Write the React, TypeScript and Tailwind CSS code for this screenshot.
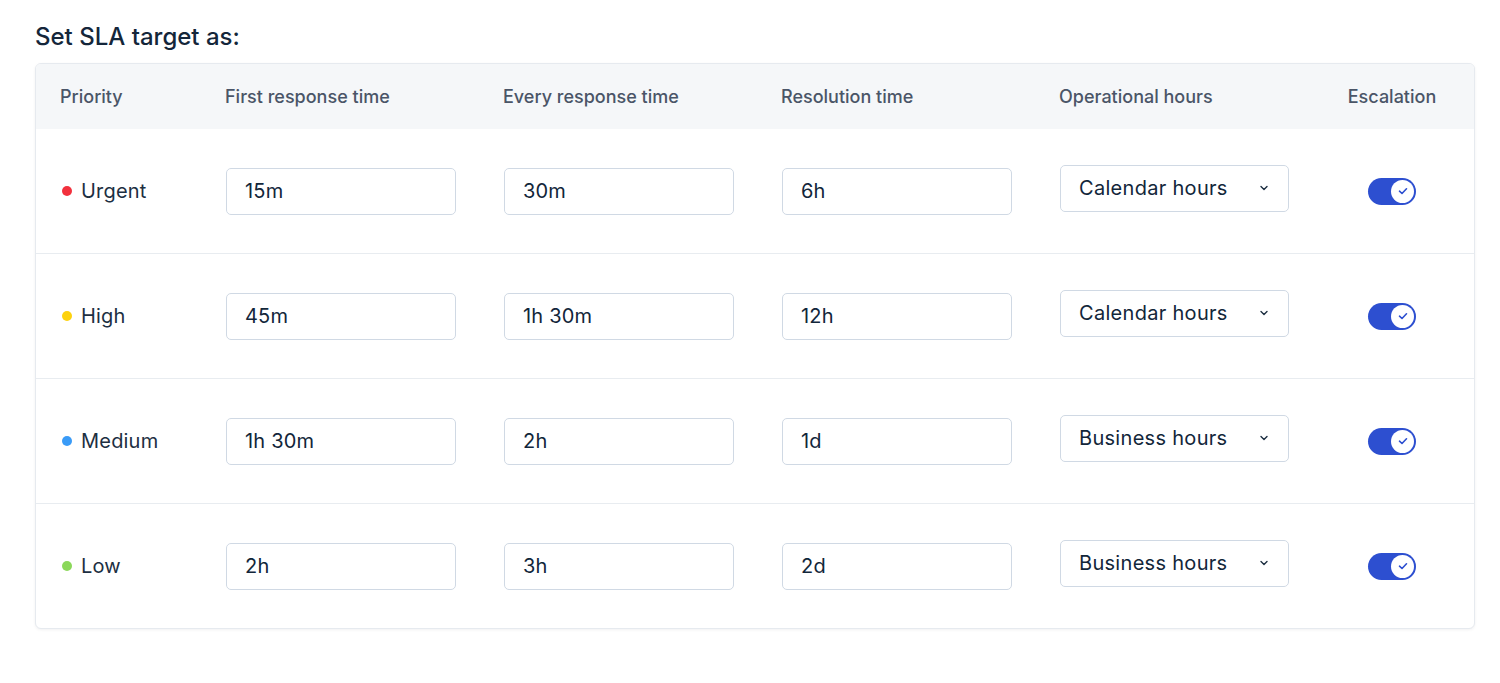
import { useState } from "react";

type Row = {
  priority: string;
  dot: string;
  first: string;
  every: string;
  resolution: string;
  hours: string;
};

const rows: Row[] = [
  { priority: "Urgent", dot: "bg-[#f2313d]", first: "15m", every: "30m", resolution: "6h", hours: "Calendar hours" },
  { priority: "High", dot: "bg-[#fdd20e]", first: "45m", every: "1h 30m", resolution: "12h", hours: "Calendar hours" },
  { priority: "Medium", dot: "bg-[#3a9bf7]", first: "1h 30m", every: "2h", resolution: "1d", hours: "Business hours" },
  { priority: "Low", dot: "bg-[#8bd85a]", first: "2h", every: "3h", resolution: "2d", hours: "Business hours" },
];

const cols = "grid grid-cols-[165px_278px_278px_278px_278px_1fr] items-center pl-[24px] pr-[27px]";

const inputClass =
  "ml-px h-[47px] w-[230px] rounded-[5px] border border-[#d0d9e4] bg-white px-[18px] text-[20px] tracking-[0.01em] text-[#12263a] outline-none";

function Toggle({ on, onChange }: { on: boolean; onChange: () => void }) {
  return (
    <button
      type="button"
      onClick={onChange}
      className={`relative h-[27px] w-[48px] rounded-full ${on ? "bg-[#2d4fd0]" : "bg-[#cbd5e1]"}`}
    >
      <span
        className={`absolute top-[2px] flex h-[23px] w-[23px] items-center justify-center rounded-full bg-white ${on ? "left-[23px]" : "left-[2px]"}`}
      >
        {on && (
          <svg width="14" height="14" viewBox="0 0 14 14" fill="none">
            <path d="M3.5 7.2 6 9.5 10.5 4.8" stroke="#2d4fd0" strokeWidth="1.6" strokeLinecap="round" strokeLinejoin="round" />
          </svg>
        )}
      </span>
    </button>
  );
}

export default function App() {
  const [escalation, setEscalation] = useState([true, true, true, true]);

  return (
    <div className="min-h-screen bg-white px-[35px] pt-[21px] font-['Inter',sans-serif] text-[#12263a]">
      <h2 className="mb-[10px] text-[24px] font-medium leading-[32px] text-[#14263a]">Set SLA target as:</h2>

      <div className="w-[1440px] overflow-hidden rounded-[6px] border border-[#e6eaef] bg-white shadow-[0_1px_3px_rgba(16,24,40,0.06)]">
        <div className={`${cols} h-[65px] bg-[#f5f7f9] text-[18px] font-medium text-[#4a5567]`}>
          <div>Priority</div>
          <div>First response time</div>
          <div>Every response time</div>
          <div>Resolution time</div>
          <div>Operational hours</div>
          <div className="text-center">Escalation</div>
        </div>

        {rows.map((r, i) => (
          <div key={r.priority} className={`${cols} ${i > 0 ? "h-[125px] border-t border-[#e8ecf0]" : "h-[124px]"}`}>
            <div className="flex items-center gap-[9px] text-[20px] tracking-[0.01em] text-[#1d2f42]">
              <span className={`ml-[2px] h-[10px] w-[10px] rounded-full ${r.dot}`} />
              {r.priority}
            </div>
            <div>
              <input className={inputClass} defaultValue={r.first} />
            </div>
            <div>
              <input className={inputClass} defaultValue={r.every} />
            </div>
            <div>
              <input className={`${inputClass} w-[229px]`} defaultValue={r.resolution} />
            </div>
            <div className="-mt-[6px]">
              <div className="ml-px flex h-[47px] w-[229px] items-center justify-between rounded-[5px] border border-[#d0d9e4] bg-white pl-[18px] pr-[18px] text-[20px] tracking-[0.015em] text-[#12263a]">
                <span>{r.hours}</span>
                <svg width="12" height="12" viewBox="0 0 12 12" fill="none">
                  <path d="M3 4.5 6 7.5 9 4.5" stroke="#1d2f42" strokeWidth="1.4" strokeLinecap="round" strokeLinejoin="round" />
                </svg>
              </div>
            </div>
            <div className="flex justify-center">
              <Toggle
                on={escalation[i]}
                onChange={() => setEscalation(escalation.map((v, j) => (j === i ? !v : v)))}
              />
            </div>
          </div>
        ))}
      </div>
    </div>
  );
}
